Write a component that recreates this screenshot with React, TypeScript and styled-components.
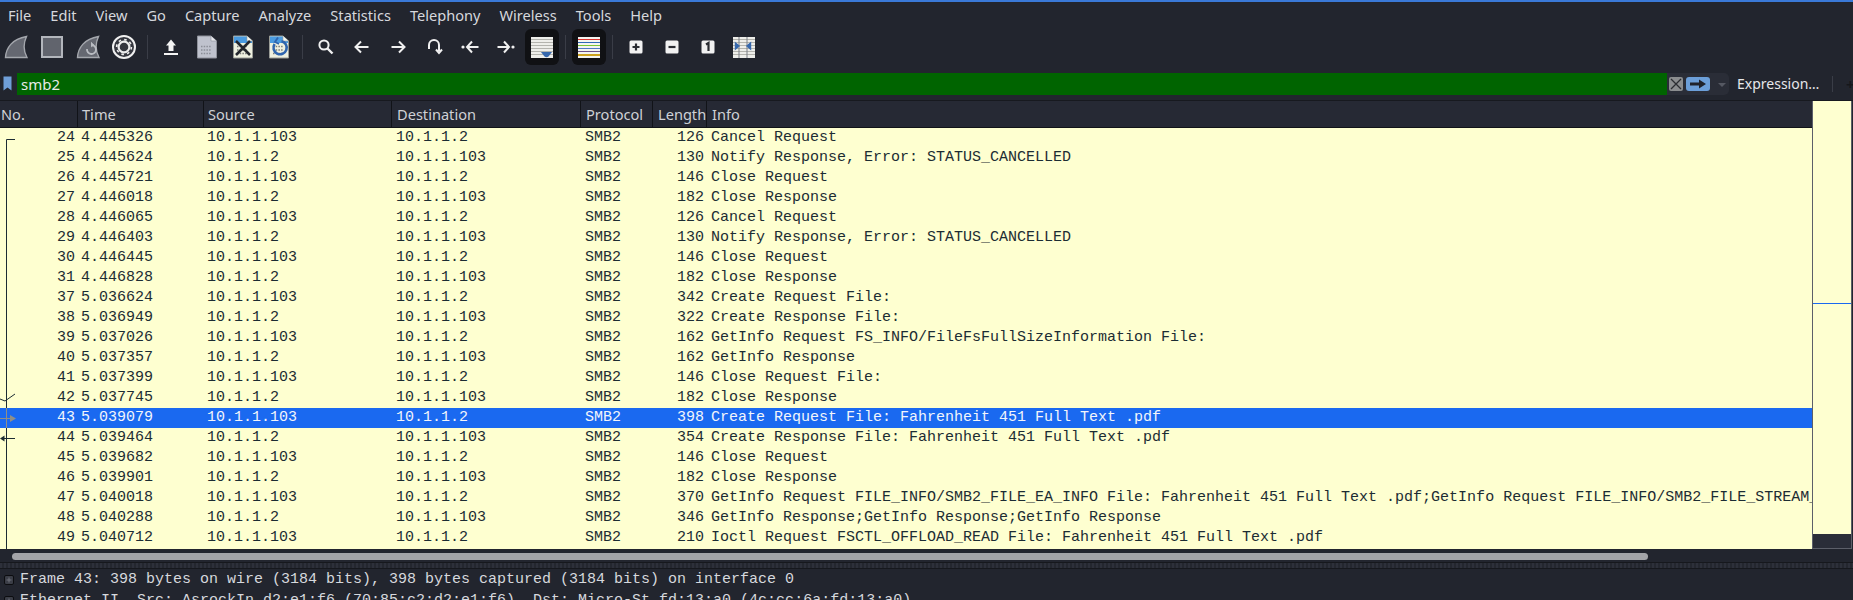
import React from "react";
import styled, { createGlobalStyle } from "styled-components";

const Global = createGlobalStyle`
  html, body { margin: 0; padding: 0; background: #22252e; }
  * { box-sizing: border-box; }
`;

const COLS = "78px 126px 188px 189px 72px 54px 1fr";

const Window = styled.div`
  width: 1853px;
  height: 600px;
  overflow: hidden;
  display: flex;
  flex-direction: column;
  background: #22252e;
  border-top: 2px solid #3a79d8;
  font-family: "Noto Sans", sans-serif;
  color: #d6d8dd;
`;
const MenuBar = styled.div`
  height: 26px;
  flex: none;
  display: flex;
  align-items: center;
  gap: 19px;
  padding-left: 8px;
  font-size: 14.6px;
`;
const MenuItem = styled.span`
  white-space: nowrap;
`;
const Toolbar = styled.div`
  height: 38px;
  flex: none;
  display: flex;
  align-items: center;
  gap: 4px;
`;
const ToolButton = styled.div<{ $active?: boolean }>`
  width: ${(p) => (p.$active ? 34 : 32)}px;
  height: 36px;
  flex: none;
  display: flex;
  align-items: center;
  justify-content: center;
  margin: 0 ${(p) => (p.$active ? -1 : 0)}px;
  border-radius: 6px;
  background: ${(p) => (p.$active ? "#101114" : "transparent")};
`;
const ToolSep = styled.div`
  width: 1px;
  height: 24px;
  flex: none;
  margin: 0 3px;
  background: #3a3d47;
`;
const FilterRow = styled.div`
  height: 35px;
  flex: none;
  display: flex;
  align-items: center;
  padding: 1px 0 0 3px;
  border-bottom: 1px solid #17191f;
`;
const BookmarkSlot = styled.div`
  width: 14px;
  flex: none;
  display: flex;
`;
const FilterBox = styled.div`
  width: 1712px;
  height: 22px;
  flex: none;
  display: flex;
  align-items: center;
  border-radius: 0 5px 5px 0;
  background: #2a2d37;
`;
const FilterInput = styled.div`
  width: 1650px;
  height: 22px;
  flex: none;
  display: flex;
  align-items: center;
  padding-left: 4px;
  background: #006400;
  color: #e8eae6;
  font-size: 15px;
`;
const ClearBtn = styled.div`
  width: 14px;
  height: 14px;
  flex: none;
  margin-left: 2px;
  border-radius: 2px;
  background: #8b8d8f;
  display: flex;
`;
const ApplyBtn = styled.div`
  width: 24px;
  height: 14px;
  flex: none;
  margin-left: 3px;
  border-radius: 3px;
  background: #6c9fd9;
  display: flex;
  align-items: center;
  justify-content: center;
`;
const DropArrow = styled.div`
  width: 0;
  height: 0;
  flex: none;
  margin: 2px 0 0 8px;
  border-left: 4px solid transparent;
  border-right: 4px solid transparent;
  border-top: 4px solid #555862;
`;
const ExpressionLabel = styled.div`
  width: 95px;
  flex: none;
  margin-left: 8px;
  font-size: 14px;
  color: #e6e7ea;
  white-space: nowrap;
`;
const BarSep = styled.div`
  width: 1px;
  height: 16px;
  flex: none;
  background: #3a3d47;
`;
const PlusLabel = styled.div`
  flex: none;
  margin-left: 13px;
  color: #15171c;
  font-size: 15px;
  font-weight: 700;
`;
const PacketPane = styled.div`
  height: 448px;
  flex: none;
  display: flex;
`;
const PacketList = styled.div`
  width: 1812px;
  flex: none;
  display: flex;
  flex-direction: column;
  position: relative;
  background: #feffd0;
`;
const HeaderRow = styled.div`
  height: 27px;
  flex: none;
  display: grid;
  grid-template-columns: ${COLS};
  background: #262934;
  border-bottom: 1px solid #111318;
`;
const HeaderCell = styled.div<{ $pad?: number }>`
  display: flex;
  align-items: center;
  padding-left: ${(p) => p.$pad ?? 4}px;
  border-right: 1px solid #111318;
  font-size: 14.6px;
  color: #cfd1d6;
  white-space: nowrap;
  overflow: hidden;
  &:last-child { border-right: none; }
`;
const Row = styled.div<{ $selected?: boolean }>`
  height: 20px;
  flex: none;
  display: grid;
  grid-template-columns: ${COLS};
  background: ${(p) => (p.$selected ? "#1a69f0" : "#feffd0")};
  color: ${(p) => (p.$selected ? "#f2f5fb" : "#1c2c33")};
  font-family: "Liberation Mono", monospace;
  font-size: 15px;
  line-height: 20px;
`;
const Cell = styled.div<{ $right?: boolean; $pad?: number }>`
  white-space: pre;
  overflow: hidden;
  text-align: ${(p) => (p.$right ? "right" : "left")};
  padding-left: ${(p) => (p.$right ? 0 : p.$pad ?? 3)}px;
  padding-right: ${(p) => (p.$right ? 3 : 0)}px;
`;
const RelatedOverlay = styled.svg`
  position: absolute;
  left: 0;
  top: 27px;
  pointer-events: none;
`;
const Minimap = styled.div`
  width: 40px;
  flex: none;
  display: flex;
  flex-direction: column;
  background: #feffd0;
  border-left: 1px solid #5c5f69;
  border-right: 1px solid #5c5f69;
  border-bottom: 1px solid #5c5f69;
`;
const MinimapFill = styled.div`
  flex: 1;
`;
const MinimapMark = styled.div`
  height: 1px;
  flex: none;
  margin-top: 202px;
  background: #1a69f0;
`;
const MinimapEnd = styled.div`
  height: 14px;
  flex: none;
  background: #2a2d38;
`;
const ScrollTrack = styled.div`
  height: 13px;
  flex: none;
  padding: 4px 0 0 12px;
`;
const ScrollThumb = styled.div`
  width: 1636px;
  height: 7px;
  border-radius: 4px;
  background: #a3a4a8;
`;
const Splitter = styled.div`
  height: 7px;
  flex: none;
  border-top: 1px solid #16181d;
  border-bottom: 1px solid #16181d;
  background: repeating-linear-gradient(90deg, #2d303a 0 2px, #24272f 2px 4px);
`;
const Details = styled.div`
  flex: 1;
  padding: 0 0 0 4px;
  font-family: "Liberation Mono", monospace;
  font-size: 15px;
  line-height: 21px;
  color: #d6d8dd;
`;
const TreeRow = styled.div`
  display: flex;
  align-items: center;
  height: 21px;
  gap: 6px;
  white-space: pre;
`;
const Expander = styled.div`
  width: 10px;
  height: 10px;
  flex: none;
  border: 1px solid #0c0d10;
  border-radius: 2px;
  background: #3a3d46;
  display: flex;
  align-items: center;
  justify-content: center;
`;

type P = [number, string, string, string, number, string];
const A = "10.1.1.103";
const B = "10.1.1.2";
const packets: P[] = [
  [24, "4.445326", A, B, 126, "Cancel Request"],
  [25, "4.445624", B, A, 130, "Notify Response, Error: STATUS_CANCELLED"],
  [26, "4.445721", A, B, 146, "Close Request"],
  [27, "4.446018", B, A, 182, "Close Response"],
  [28, "4.446065", A, B, 126, "Cancel Request"],
  [29, "4.446403", B, A, 130, "Notify Response, Error: STATUS_CANCELLED"],
  [30, "4.446445", A, B, 146, "Close Request"],
  [31, "4.446828", B, A, 182, "Close Response"],
  [37, "5.036624", A, B, 342, "Create Request File:"],
  [38, "5.036949", B, A, 322, "Create Response File:"],
  [39, "5.037026", A, B, 162, "GetInfo Request FS_INFO/FileFsFullSizeInformation File:"],
  [40, "5.037357", B, A, 162, "GetInfo Response"],
  [41, "5.037399", A, B, 146, "Close Request File:"],
  [42, "5.037745", B, A, 182, "Close Response"],
  [43, "5.039079", A, B, 398, "Create Request File: Fahrenheit 451 Full Text .pdf"],
  [44, "5.039464", B, A, 354, "Create Response File: Fahrenheit 451 Full Text .pdf"],
  [45, "5.039682", A, B, 146, "Close Request"],
  [46, "5.039901", B, A, 182, "Close Response"],
  [47, "5.040018", A, B, 370, "GetInfo Request FILE_INFO/SMB2_FILE_EA_INFO File: Fahrenheit 451 Full Text .pdf;GetInfo Request FILE_INFO/SMB2_FILE_STREAM_"],
  [48, "5.040288", B, A, 346, "GetInfo Response;GetInfo Response;GetInfo Response"],
  [49, "5.040712", A, B, 210, "Ioctl Request FSCTL_OFFLOAD_READ File: Fahrenheit 451 Full Text .pdf"],
];
const menus = ["File", "Edit", "View", "Go", "Capture", "Analyze", "Statistics", "Telephony", "Wireless", "Tools", "Help"];

const Fin = ({ reload }: { reload?: boolean }) => (
  <svg width="24" height="24" viewBox="0 0 24 24">
    <path d="M1.5 22.5C2 13 8 4 22.5 1.5C19 9 19.5 16 23 22.5Z" fill="#656871" stroke="#a4a7ad" strokeWidth="1.4" />
    {reload && (
      <g fill="none" stroke="#b9bcc2" strokeWidth="1.8">
        <path d="M11 14a4.5 4.5 0 1 0 4.5-4" />
        <path d="M15 7l3 3-3 2" fill="#b9bcc2" strokeWidth="0.6" />
      </g>
    )}
  </svg>
);
const Stop = () => (
  <svg width="24" height="24" viewBox="0 0 24 24">
    <rect x="2" y="2" width="20" height="20" fill="#61646d" stroke="#b3b6bc" strokeWidth="2" />
  </svg>
);
const Gear = () => (
  <svg width="26" height="26" viewBox="0 0 26 26">
    <circle cx="13" cy="13" r="11" fill="#34363e" stroke="#f0f0f0" strokeWidth="2" />
    <circle cx="13" cy="13" r="5.4" fill="none" stroke="#ececec" strokeWidth="2.2" />
    <circle cx="13" cy="13" r="7.4" fill="none" stroke="#ececec" strokeWidth="1.6" strokeDasharray="2.6 3.2" />
  </svg>
);
const Upload = () => (
  <svg width="16" height="18" viewBox="0 0 16 18">
    <path d="M8 1.5L13 7.5H10.5V13H5.5V7.5H3Z" fill="#f4f4f4" />
    <rect x="1" y="15" width="14" height="2" fill="#f4f4f4" />
  </svg>
);
const Binary = ({ color }: { color: string }) => (
  <g fill="none" stroke={color} strokeWidth="1.5" strokeDasharray="1.5 1.2">
    <path d="M5 11.5H15.5M5 15H15.5M5 18.5H15.5" />
  </g>
);
const Doc = ({ kind }: { kind: "plain" | "close" | "reload" }) => {
  const plain = kind === "plain";
  return (
    <svg width="22" height="24" viewBox="0 0 22 24">
      <path d="M1.5 1H15L20.5 6V23H1.5Z" fill={plain ? "#bfc2cd" : "#eef0e0"} stroke={plain ? "#8f929b" : "#9a9c96"} />
      {!plain && <path d="M2 1.5H15L20 6V8H2Z" fill="#4a9be0" />}
      <path d="M15 1V6H20.5" fill={plain ? "#e6e7ec" : "#f6f7ef"} stroke={plain ? "#8f929b" : "#9a9c96"} strokeWidth="0.6" />
      <Binary color={plain ? "#8b8e97" : "#7a7c78"} />
      {kind === "close" && <path d="M4 6L18 20M18 6L4 20" stroke="#23262c" strokeWidth="2.6" />}
      {kind === "reload" && (
        <g fill="none" stroke="#2f65ae" strokeWidth="2.6">
          <path d="M13.5 6.2A6.6 6.6 0 1 1 6.6 9" />
          <path d="M10 2.5L7 7L11 9" strokeWidth="1.8" />
        </g>
      )}
    </svg>
  );
};
const Line = ({ d, w = 18 }: { d: React.ReactNode; w?: number }) => (
  <svg width={w} height="18" viewBox={`0 0 ${w} 18`} fill="none" stroke="#f0f0f0" strokeWidth="2">
    {d}
  </svg>
);
const Search = () => <Line d={<><circle cx="7" cy="7" r="4.6" /><path d="M10.5 10.5L15.5 15.5" strokeWidth="2.4" /></>} />;
const Left = () => <Line d={<path d="M2.5 9H15.5M8 3.5L2.5 9L8 14.5" />} />;
const Right = () => <Line d={<path d="M15.5 9H2.5M10 3.5L15.5 9L10 14.5" />} />;
const Jump = () => <Line d={<><path d="M4 11V7a5 5 0 0 1 10 0v6" /><path d="M11 11.5l3 3.5 3-3.5" /></>} />;
const First = () => (
  <Line d={<><circle cx="2" cy="9" r="1.6" fill="#f0f0f0" stroke="none" /><path d="M6.5 9H17.5M11 3.5L6 9L11 14.5" /></>} />
);
const Last = () => (
  <Line d={<><circle cx="16" cy="9" r="1.6" fill="#f0f0f0" stroke="none" /><path d="M0.5 9H11.5M7 3.5L12 9L7 14.5" /></>} />
);
const Striped = ({ children }: { children?: React.ReactNode }) => (
  <svg width="22" height="21" viewBox="0 0 22 21">
    <rect width="22" height="21" fill="#eeeeea" />
    <path d="M0 2.5H22M0 5.5H22M0 8.5H22M0 11.5H22M0 14.5H22M0 17.5H22" stroke="#b4b4ae" strokeWidth="1" />
    {children}
  </svg>
);
const AutoScroll = () => (
  <Striped>
    <path d="M10 15H21L17.5 19.5Q15.5 21 13.5 19.5Z" fill="#3668ad" />
  </Striped>
);
const Colorize = () => (
  <svg width="22" height="21" viewBox="0 0 22 21">
    <rect width="22" height="21" fill="#f4f4f0" />
    <path d="M0 2.5H22" stroke="#d8302c" strokeWidth="1" />
    <path d="M0 5.5H22" stroke="#2f68b8" strokeWidth="1" />
    <path d="M0 8.5H22" stroke="#7cc436" strokeWidth="1" />
    <path d="M0 11.5H22" stroke="#4f78c4" strokeWidth="1" />
    <path d="M0 14.5H22" stroke="#6a4f85" strokeWidth="1" />
    <path d="M0 18H22" stroke="#cda21c" strokeWidth="2" />
  </svg>
);
const Zoom = ({ d }: { d: string }) => (
  <svg width="12" height="12" viewBox="0 0 12 12" style={{ overflow: "visible" }}>
    <rect x="-0.5" y="-0.5" width="13" height="13" rx="1.5" fill="#f2f2f2" />
    <path d={d} fill="none" stroke="#2a2c32" strokeWidth={2.2} />
  </svg>
);
const Resize = () => (
  <Striped>
    <path d="M6 0V21M14 0V21" stroke="#7d8087" strokeWidth="1" />
    <path d="M2.5 6L6 9L2.5 12Z M17.5 6L14 9L17.5 12Z" fill="#3668ad" stroke="#3668ad" strokeWidth="1.4" />
  </Striped>
);
const PlusMark = () => (
  <svg width="6" height="6" viewBox="0 0 6 6">
    <path d="M3 0.5V5.5M0.5 3H5.5" stroke="#6f727a" strokeWidth="1" />
  </svg>
);

export default function App() {
  return (
    <Window>
      <Global />
      <MenuBar>
        {menus.map((m) => (
          <MenuItem key={m}>{m}</MenuItem>
        ))}
      </MenuBar>
      <Toolbar>
        <ToolButton><Fin /></ToolButton>
        <ToolButton><Stop /></ToolButton>
        <ToolButton><Fin reload /></ToolButton>
        <ToolButton><Gear /></ToolButton>
        <ToolSep />
        <ToolButton><Upload /></ToolButton>
        <ToolButton><Doc kind="plain" /></ToolButton>
        <ToolButton><Doc kind="close" /></ToolButton>
        <ToolButton><Doc kind="reload" /></ToolButton>
        <ToolSep />
        <ToolButton><Search /></ToolButton>
        <ToolButton><Left /></ToolButton>
        <ToolButton><Right /></ToolButton>
        <ToolButton><Jump /></ToolButton>
        <ToolButton><First /></ToolButton>
        <ToolButton><Last /></ToolButton>
        <ToolButton $active><AutoScroll /></ToolButton>
        <ToolSep />
        <ToolButton $active><Colorize /></ToolButton>
        <ToolSep />
        <ToolButton><Zoom d="M6 2.5V9.5M2.5 6H9.5" /></ToolButton>
        <ToolButton><Zoom d="M2.5 6H9.5" /></ToolButton>
        <ToolButton><Zoom d="M4 3.5L6.5 2V10" /></ToolButton>
        <ToolButton><Resize /></ToolButton>
      </Toolbar>
      <FilterRow>
        <BookmarkSlot>
          <svg width="9" height="15" viewBox="0 0 9 15">
            <path d="M0.5 0.5H8.5V14.5L4.5 11.5L0.5 14.5Z" fill="#6f9fd8" />
          </svg>
        </BookmarkSlot>
        <FilterBox>
          <FilterInput>smb2</FilterInput>
          <ClearBtn>
            <svg width="14" height="14" viewBox="0 0 14 14">
              <path d="M2 2L12 12M12 2L2 12" stroke="#2b2d32" strokeWidth="1.3" />
            </svg>
          </ClearBtn>
          <ApplyBtn>
            <svg width="18" height="10" viewBox="0 0 18 10">
              <path d="M1 3.5H10V0.5L17 5L10 9.5V6.5H1Z" fill="#20232b" />
            </svg>
          </ApplyBtn>
          <DropArrow />
        </FilterBox>
        <ExpressionLabel>Expression…</ExpressionLabel>
        <BarSep />
        <PlusLabel>+</PlusLabel>
      </FilterRow>
      <PacketPane>
        <PacketList>
          <HeaderRow>
            <HeaderCell $pad={1}>No.</HeaderCell>
            <HeaderCell>Time</HeaderCell>
            <HeaderCell>Source</HeaderCell>
            <HeaderCell $pad={5}>Destination</HeaderCell>
            <HeaderCell $pad={5}>Protocol</HeaderCell>
            <HeaderCell $pad={5}>Length</HeaderCell>
            <HeaderCell $pad={5}>Info</HeaderCell>
          </HeaderRow>
          {packets.map((p) => (
            <Row key={p[0]} $selected={p[0] === 43}>
              <Cell $right>{p[0]}</Cell>
              <Cell>{p[1]}</Cell>
              <Cell>{p[2]}</Cell>
              <Cell $pad={4}>{p[3]}</Cell>
              <Cell $pad={4}>SMB2</Cell>
              <Cell $right>{p[4]}</Cell>
              <Cell $pad={4}>{p[5]}</Cell>
            </Row>
          ))}
          <RelatedOverlay width="18" height="421" viewBox="0 0 18 421" fill="none">
            <path d="M6.5 421V11.5H15" stroke="#1c2c33" strokeWidth="1" />
            <path d="M0 271L5 273L15 266" stroke="#1c2c33" strokeWidth="1" />
            <path d="M6.5 280V300" stroke="#8f8f88" strokeWidth="1" />
            <path d="M0 290.5H11" stroke="#8f8f88" strokeWidth="1" />
            <path d="M10 287L16 290.5L10 294Z" fill="#8f8f88" />
            <path d="M3 310.5H15" stroke="#1c2c33" strokeWidth="1" />
            <path d="M4.5 307.5L0 310.5L4.5 313.5Z" fill="#1c2c33" />
          </RelatedOverlay>
        </PacketList>
        <Minimap>
          <MinimapMark />
          <MinimapFill />
          <MinimapEnd />
        </Minimap>
      </PacketPane>
      <ScrollTrack>
        <ScrollThumb />
      </ScrollTrack>
      <Splitter />
      <Details>
        <TreeRow>
          <Expander><PlusMark /></Expander>
          Frame 43: 398 bytes on wire (3184 bits), 398 bytes captured (3184 bits) on interface 0
        </TreeRow>
        <TreeRow>
          <Expander><PlusMark /></Expander>
          Ethernet II, Src: AsrockIn_d2:e1:f6 (70:85:c2:d2:e1:f6), Dst: Micro-St_fd:13:a0 (4c:cc:6a:fd:13:a0)
        </TreeRow>
      </Details>
    </Window>
  );
}
